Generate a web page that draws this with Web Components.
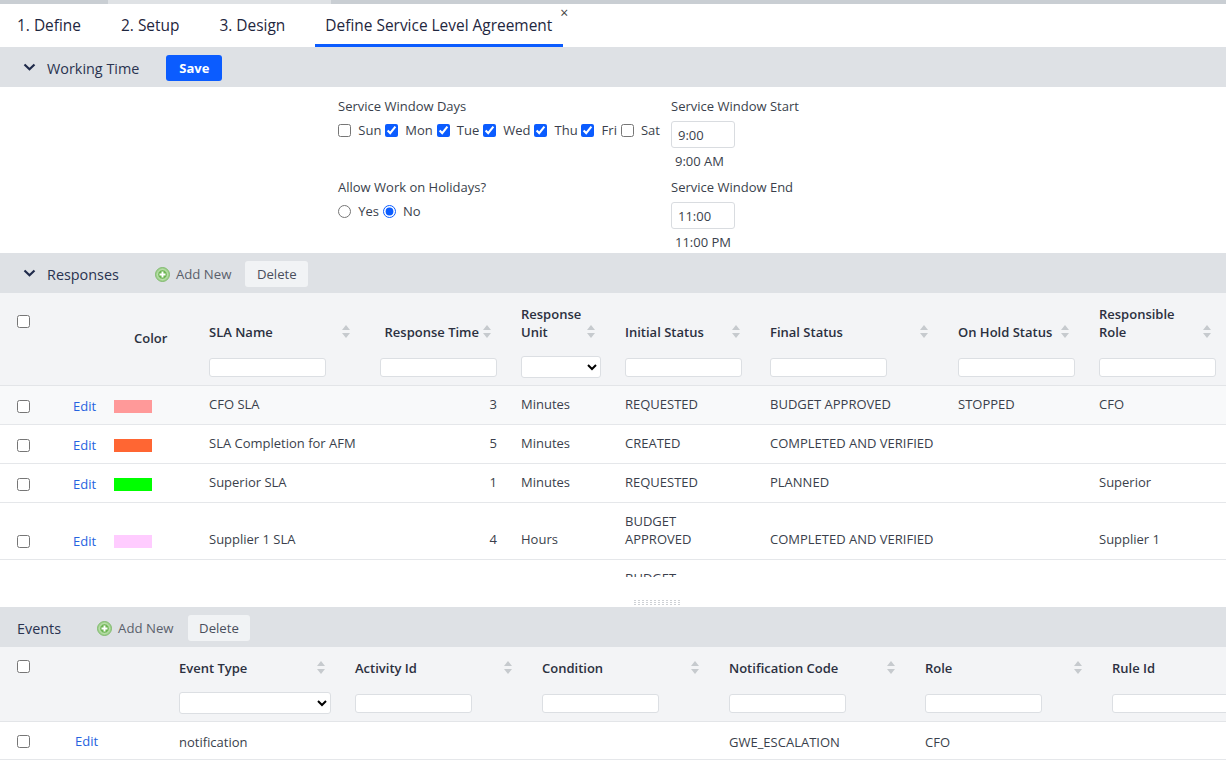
<!DOCTYPE html>
<html lang="en">
<head>
<meta charset="utf-8">
<title>Define Service Level Agreement</title>
<style>
    html, body { margin: 0; background: #fff; overflow: hidden; }
    body { font-family: "Open Sans", "Noto Sans", sans-serif; font-size: 13px; color: #2b3040; }
</style>
</head>
<body>
<app-tabs></app-tabs>

<panel-bar heading="Working Time" chevron>
    <action-button primary>Save</action-button>
</panel-bar>
<working-time></working-time>

<panel-bar heading="Responses" chevron>
    <add-new></add-new>
    <action-button>Delete</action-button>
</panel-bar>
<data-grid id="responses"></data-grid>
<pane-splitter></pane-splitter>

<panel-bar heading="Events">
    <add-new></add-new>
    <action-button>Delete</action-button>
</panel-bar>
<data-grid id="events"></data-grid>

<script>
class AppTabs extends HTMLElement {
    constructor() {
        super()
        this.attachShadow({ mode: 'open' })
        this.shadowRoot.innerHTML = `
            <style>
            :host { display: block; font-size: 15.45px; font-weight: 500; color: #1f2740; }
            .strip { display: flex; height: 4px; background: #c9ced3; }
            .strip i { width: 223px; margin-left: 108px; background: #dfe2e5; }
            .tabs { display: flex; height: 43px; position: relative; }
            .tab { box-sizing: border-box; height: 43px; padding: 12px 10px 0; margin-right: 20px; line-height: 19px; white-space: nowrap; }
            .tab:first-child { padding-left: 17px; }
            .tab.active { border-bottom: 3px solid #0b5cff; position: relative; margin-right: 0; padding-right: 11px; }
            .close { position: absolute; right: -5px; top: 1px; font-size: 14px; line-height: 16px; font-weight: 400; color: #444; }
            </style>
            <div class="strip"><i></i></div>
            <div class="tabs">
                <div class="tab">1. Define</div>
                <div class="tab">2. Setup</div>
                <div class="tab">3. Design</div>
                <div class="tab active">Define Service Level Agreement<span class="close">×</span></div>
            </div>
        `
    }
}

class PanelBar extends HTMLElement {
    constructor() {
        super()
        this.attachShadow({ mode: 'open' })
        const chevron = this.hasAttribute('chevron')
        this.shadowRoot.innerHTML = `
            <style>
            :host { display: flex; align-items: center; height: 40px; background: #dee1e5; padding-left: ${chevron ? 23 : 17}px; }
            svg { width: 13px; height: 8px; margin-right: 11px; }
            .title { font-size: 14.4px; font-weight: 500; color: #2a3350; margin-right: 26px; padding-top: 2px; }
            .actions { display: flex; align-items: center; padding-top: 2px; }
            </style>
            ${chevron ? '<svg viewBox="0 0 13 8"><path d="M1.5 1.5 6.5 6.2 11.5 1.5" fill="none" stroke="#1f2a4a" stroke-width="2.2"/></svg>' : ''}
            <span class="title">${this.getAttribute('heading')}</span>
            <div class="actions"><slot></slot></div>
        `
    }
}

class ActionButton extends HTMLElement {
    constructor() {
        super()
        this.attachShadow({ mode: 'open' })
        this.shadowRoot.innerHTML = `
            <style>
            :host { display: inline-block; box-sizing: border-box; height: 26px; line-height: 26px; padding: 0 11.5px; border-radius: 3px;
                    font-size: 13.2px; font-weight: 500; background: #f1f3f5; color: #4a4f5c; }
            :host([primary]) { background: #0b5cff; color: #fff; margin-left: 1px; padding: 0 13px; font-size: 13px; font-weight: 700; }
            </style>
            <slot></slot>
        `
    }
}

class AddNew extends HTMLElement {
    constructor() {
        super()
        this.attachShadow({ mode: 'open' })
        this.shadowRoot.innerHTML = `
            <style>
            :host { display: inline-flex; align-items: center; padding-left: 10px; margin-right: 14px; font-size: 13.2px; font-weight: 500; color: #5a5f6b; }
            svg { width: 15px; height: 15px; margin-right: 6px; }
            </style>
            <svg viewBox="0 0 15 15">
                <circle cx="7.5" cy="7.5" r="7" fill="#a5d492" stroke="#79b566" stroke-width=".9"/>
                <circle cx="7.5" cy="7.5" r="4.8" fill="#6db553" stroke="#d2ebc8" stroke-width=".8"/>
                <path d="M7.5 4.5v6M4.5 7.5h6" stroke="#fff" stroke-width="1.9"/>
            </svg>
            <span>Add New</span>
        `
    }
}

class WorkingTime extends HTMLElement {
    constructor() {
        super()
        this.attachShadow({ mode: 'open' })
        const days = [['Sun', 0], ['Mon', 1], ['Tue', 1], ['Wed', 1], ['Thu', 1], ['Fri', 1], ['Sat', 0]]
        this.shadowRoot.innerHTML = `
            <style>
            :host { display: grid; grid-template-columns: 333px auto; grid-template-rows: 81px 85px; box-sizing: border-box; height: 166px;
                    padding-left: 338px; font-size: 13px; line-height: 18px; color: #3a3f4c; }
            .label { padding-top: 10px; height: 18px; }
            .opts { display: flex; margin-top: 6px; height: 18px; align-items: center; }
            .opts label { display: flex; align-items: center; margin-right: 3.7px; }
            input[type=checkbox], input[type=radio] { width: 13px; height: 13px; margin: 0 7.3px 0 0; accent-color: #0b5cff; }
            .time { box-sizing: border-box; display: block; width: 64px; height: 27px; margin-top: 6px; padding: 0 6px; border: 1px solid #d9dce0; border-radius: 3px;
                    font: inherit; color: inherit; background: #fff; }
            .hint { padding: 4px 0 0 4px; }
            </style>
            <div>
                <div class="label">Service Window Days</div>
                <div class="opts">
                    ${days.map(d => `<label><input type="checkbox" ${d[1] ? 'checked' : ''}>${d[0]}</label>`).join('')}
                </div>
            </div>
            <div>
                <div class="label">Service Window Start</div>
                <input class="time" value="9:00">
                <div class="hint">9:00 AM</div>
            </div>
            <div>
                <div class="label">Allow Work on Holidays?</div>
                <div class="opts">
                    <label><input type="radio" name="hol">Yes</label>
                    <label><input type="radio" name="hol" checked>No</label>
                </div>
            </div>
            <div>
                <div class="label">Service Window End</div>
                <input class="time" value="11:00">
                <div class="hint">11:00 PM</div>
            </div>
        `
    }
}

const sortIcon = '<svg class="sort" viewBox="0 0 8 13"><path d="M4 0 8 5H0Z M4 13 0 8h8Z" fill="#c6cace"/></svg>'

class DataGrid extends HTMLElement {
    constructor() {
        super()
        this.attachShadow({ mode: 'open' })
    }

    set data(value) {
        const { height, titleH, filterH, titlePad, textTop, textBottom, editBottom, columns, rows } = value
        const total = columns.reduce((sum, c) => sum + c.w, 0)
        this.shadowRoot.innerHTML = `
            <style>
            :host { display: block; height: ${height}px; overflow: hidden; font-size: 13px; line-height: 18px; color: #3a3f4c; }
            table { table-layout: fixed; border-collapse: separate; border-spacing: 0; width: ${total}px; }
            thead { background: #f3f4f6; }
            th { padding: 0 12px; font-weight: 600; font-size: 13px; color: #2b3040; text-align: left; }
            .titles th { height: ${titleH}px; box-sizing: border-box; vertical-align: bottom; padding-bottom: ${titlePad}px; }
            .filters th { height: ${filterH}px; box-sizing: border-box; vertical-align: middle; border-bottom: 1px solid #e3e5e8; }
            th.head-check { vertical-align: top !important; padding: 0 0 0 17px; border-bottom: 1px solid #e3e5e8; }
            th.head-check input { margin-top: ${value.checkTop}px; }
            th.head-plain { vertical-align: middle !important; border-bottom: 1px solid #e3e5e8; padding-bottom: 2px !important; }
            .title { display: flex; align-items: flex-end; justify-content: space-between; padding-right: 6px; }
            .title.end { justify-content: flex-end; gap: 4px; padding-right: 6px; white-space: nowrap; }
            .sort { flex: none; width: 8px; height: 13px; margin-bottom: 3px; }
            th input.filter, th select { display: block; box-sizing: border-box; background: #fff; border: 1px solid #dcdfe3; border-radius: 3px; margin: 0; }
            th input.filter { width: 117px; height: 19px; }
            th select { height: 22px; font: inherit; margin-top: ${value.selectTop || 0}px; }
            input[type=checkbox] { display: block; width: 13px; height: 13px; margin: 0; }
            td { padding: ${textTop}px 12px ${textBottom}px; border-bottom: 1px solid #e5e7ea; vertical-align: bottom; }
            td.num { text-align: right; }
            td.check { padding: 10px 0 11px 17px; }
            td.edit { padding-bottom: ${editBottom}px; }
            td.color { padding-bottom: 11px; }
            tr.shade td { background: #f8f9fa; }
            tr.partial td { height: 60px; vertical-align: top; padding-top: 9px; }
            a { color: #2563e0; text-decoration: none; }
            .swatch { width: 38px; height: 13px; }
            </style>
            <table>
                <colgroup>${columns.map(c => `<col style="width:${c.w}px">`).join('')}</colgroup>
                <thead>
                    <tr class="titles">${columns.map(c => this.headCell(c)).join('')}</tr>
                    <tr class="filters">${columns.filter(c => c.filter).map(c => `<th>${this.filterCell(c)}</th>`).join('')}</tr>
                </thead>
                <tbody>${rows.map(r => this.rowHtml(r, columns)).join('')}</tbody>
            </table>
        `
    }

    headCell(c) {
        if (c.type == 'check')
            return `<th rowspan="2" class="head-check"><input type="checkbox"></th>`
        if (!c.filter)
            return `<th rowspan="2" class="head-plain" style="padding-left:${c.labelPad || 12}px">${c.label || ''}</th>`
        return `<th><div class="title ${c.end ? 'end' : ''}"><span>${c.label}</span>${sortIcon}</div></th>`
    }

    filterCell(c) {
        if (c.filter == 'select')
            return `<select style="width:${c.selectW}px"><option></option></select>`
        return `<input class="filter">`
    }

    rowHtml(r, columns) {
        // the last row is scrolled past the pane edge, only its first line shows
        if (r.partial)
            return `<tr class="partial">${columns.map(c => `<td>${r.cells[c.key] || ''}</td>`).join('')}</tr>`
        const cells = columns.map(c => {
            const v = r.cells[c.key]
            if (c.type == 'check') return `<td class="check"><input type="checkbox"></td>`
            if (c.type == 'edit') return `<td class="edit"><a>Edit</a></td>`
            if (c.type == 'color') return `<td class="color"><div class="swatch" style="background:${v}"></div></td>`
            return `<td class="${c.num ? 'num' : ''}">${v == null ? '' : v}</td>`
        })
        return `<tr class="${r.shade ? 'shade' : ''}">${cells.join('')}</tr>`
    }
}

class PaneSplitter extends HTMLElement {
    constructor() {
        super()
        this.attachShadow({ mode: 'open' })
        this.shadowRoot.innerHTML = `
            <style>
            :host { display: block; box-sizing: border-box; height: 30px; padding: 23px 0 0 634px; }
            div { width: 47px; height: 5px;
                  background:
                    linear-gradient(#fff 1px, transparent 1px) 0 1px / 100% 2px,
                    linear-gradient(90deg, #ced1d5 2px, transparent 2px) 0 0 / 4px 100%; }
            </style>
            <div></div>
        `
    }
}

customElements.define('app-tabs', AppTabs)
customElements.define('panel-bar', PanelBar)
customElements.define('action-button', ActionButton)
customElements.define('add-new', AddNew)
customElements.define('working-time', WorkingTime)
customElements.define('data-grid', DataGrid)
customElements.define('pane-splitter', PaneSplitter)

document.getElementById('responses').data = {
    height: 284, titleH: 56, filterH: 37, titlePad: 8, checkTop: 22, textTop: 9, textBottom: 11, editBottom: 9,
    columns: [
        { type: 'check', w: 61 },
        { type: 'edit', w: 41 },
        { type: 'color', key: 'color', w: 95, label: 'Color', labelPad: 32 },
        { key: 'name', w: 171, label: 'SLA Name', filter: 'text' },
        { key: 'time', w: 141, label: 'Response Time', filter: 'text', num: true, end: true },
        { key: 'unit', w: 104, label: 'Response Unit', filter: 'select', selectW: 80 },
        { key: 'initial', w: 145, label: 'Initial Status', filter: 'text' },
        { key: 'final', w: 188, label: 'Final Status', filter: 'text' },
        { key: 'hold', w: 141, label: 'On Hold Status', filter: 'text' },
        { key: 'role', w: 142, label: 'Responsible Role', filter: 'text' }
    ],
    rows: [
        { shade: true, cells: { color: '#ff9999', name: 'CFO SLA', time: 3, unit: 'Minutes', initial: 'REQUESTED', final: 'BUDGET APPROVED', hold: 'STOPPED', role: 'CFO' } },
        { cells: { color: '#ff6633', name: 'SLA Completion for AFM', time: 5, unit: 'Minutes', initial: 'CREATED', final: 'COMPLETED AND VERIFIED' } },
        { cells: { color: '#00ff00', name: 'Superior SLA', time: 1, unit: 'Minutes', initial: 'REQUESTED', final: 'PLANNED', role: 'Superior' } },
        { cells: { color: '#ffccff', name: 'Supplier 1 SLA', time: 4, unit: 'Hours', initial: 'BUDGET<br>APPROVED', final: 'COMPLETED AND VERIFIED', role: 'Supplier 1' } },
        { partial: true, cells: { initial: 'BUDGET' } }
    ]
}

document.getElementById('events').data = {
    height: 116, titleH: 39, filterH: 36, titlePad: 9, checkTop: 13, textTop: 10, textBottom: 8, editBottom: 9, selectTop: -1,
    columns: [
        { type: 'check', w: 63 },
        { type: 'edit', w: 104 },
        { key: 'type', w: 176, label: 'Event Type', filter: 'select', selectW: 152 },
        { key: 'activity', w: 187, label: 'Activity Id', filter: 'text' },
        { key: 'condition', w: 187, label: 'Condition', filter: 'text' },
        { key: 'code', w: 196, label: 'Notification Code', filter: 'text' },
        { key: 'role', w: 187, label: 'Role', filter: 'text' },
        { key: 'rule', w: 187, label: 'Rule Id', filter: 'text' }
    ],
    rows: [
        { cells: { type: 'notification', code: 'GWE_ESCALATION', role: 'CFO' } }
    ]
}
</script>
</body>
</html>
